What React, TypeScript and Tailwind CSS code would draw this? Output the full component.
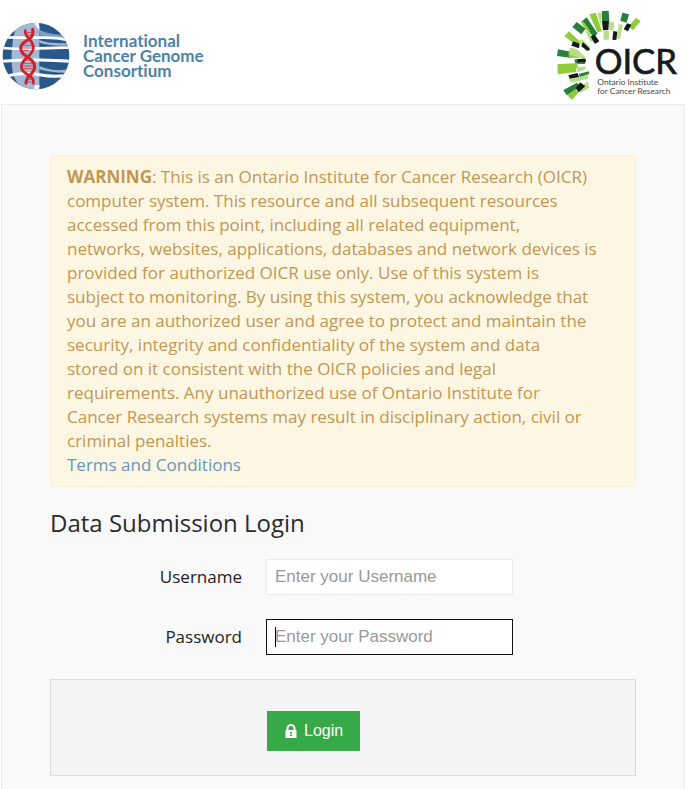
import type { ReactNode } from 'react';

const warningLines = [
  'computer system. This resource and all subsequent resources',
  'accessed from this point, including all related equipment,',
  'networks, websites, applications, databases and network devices is',
  'provided for authorized OICR use only. Use of this system is',
  'subject to monitoring. By using this system, you acknowledge that',
  'you are an authorized user and agree to protect and maintain the',
  'security, integrity and confidentiality of the system and data',
  'stored on it consistent with the OICR policies and legal',
  'requirements. Any unauthorized use of Ontario Institute for',
  'Cancer Research systems may result in disciplinary action, civil or',
  'criminal penalties.',
];

function Globe() {
  return (
    <svg className="h-[68px] w-[68px] shrink-0" viewBox="0 0 204 204" aria-hidden="true">
      <defs>
        <clipPath id="globe">
          <circle cx="102" cy="102" r="100" />
        </clipPath>
      </defs>
      <g clipPath="url(#globe)">
        <rect width="204" height="204" fill="#28598a" />
        <path d="M40 20Q64 0 112 0V204H74Q40 190 32 150Q22 90 40 20Z" fill="#a3b8d7" />
        <path d="M112 24Q150 40 190 38V50Q150 54 112 40Z" fill="#7f9fc5" />
        <path d="M112 54Q150 68 204 62V70Q150 74 112 62Z" fill="#a3b8d7" />
        <path d="M112 132Q150 150 204 142V152Q150 154 112 142Z" fill="#a3b8d7" />
        <g fill="none" stroke="#fff">
          <path d="M0 78Q40 82 112 79T204 77" strokeWidth="8" />
          <path d="M0 118Q60 113 112 114T204 118" strokeWidth="9" />
          <path d="M18 161Q70 150 112 158T196 160" strokeWidth="9" />
          <path d="M14 46Q60 48 112 47T194 54" strokeWidth="8" />
        </g>
        <path d="M94 0H108L112 14V26L104 14Z" fill="#fff" />
        <path d="M98 190H114L108 204H96Z" fill="#fff" />
      </g>
      <path
        d="M72 32H92M72 40H94M62 70H92M60 78H90M64 86H80M64 116H90M58 124H94M58 132H96M60 140H94M80 164H88M72 172H92M70 180H96"
        stroke="#e0494c"
        strokeWidth="3"
      />
      <g fill="none" strokeLinecap="round">
        <path d="M92 22C100 60 56 52 56 78C56 106 98 106 98 134C98 158 72 158 72 184" stroke="#cf2228" strokeWidth="9" />
        <path d="M70 26C66 48 98 54 94 80C90 106 56 110 58 136C60 158 100 160 94 184" stroke="#cf2228" strokeWidth="8" />
      </g>
    </svg>
  );
}

function OicrLogo() {
  return (
    <svg className="h-[104px] w-[140px] shrink-0" viewBox="0 0 420 312" role="img" aria-label="OICR Ontario Institute for Cancer Research">
      <g fill="#27803b">
        <path d="M167 34L188 32L190 64L168 65Z" />
        <path d="M229 38L249 43L242 68L223 62Z" />
        <path d="M79 81L92 66L119 86L106 103Z" />
        <path d="M106 65L122 52L155 101L142 111Z" />
        <path d="M36 148L75 155L78 174L33 168Z" />
        <path d="M85 178L120 180L117 192L88 191Z" />
        <path d="M52 270L93 248L103 262L62 286Z" />
        <path d="M98 222L128 214L130 222L102 232Z" />
      </g>
      <g fill="#90cb3c">
        <path d="M130 43L149 38L168 94L154 97Z" />
        <path d="M270 53L284 64L261 91L248 79Z" />
        <path d="M55 108L69 94L103 126L93 137Z" />
        <path d="M34 192L94 190L95 204L36 209Z" />
        <path d="M34 206L90 200L91 216L36 223Z" />
        <path d="M64 286L88 267L98 277L78 300Z" />
        <path d="M67 157L99 157L97 174L69 173Z" />
        <path d="M106 70L112 64L133 93L126 96Z" />
      </g>
      <g fill="#b8df85">
        <path d="M154 38L166 38L166 86Z" />
        <path d="M172 92L189 92L188 119L173 119Z" />
        <path d="M189 66L205 67L202 92L189 90Z" />
        <path d="M218 72L231 74L222 117L212 116Z" />
        <path d="M116 91L132 98L148 127L133 124Z" />
        <path d="M96 122L108 118L132 141L121 154Z" />
        <path d="M70 143L91 146L118 171L116 178L72 165Z" />
        <path d="M92 202L119 199L118 208L94 217Z" />
        <path d="M68 238L125 225L127 236L76 248Z" />
        <path d="M94 268L125 244L130 263L105 278Z" />
      </g>
      <g fill="#171a1b">
        <path d="M168 63L189 63L187 90L171 91Z" />
        <path d="M202 93L214 95L211 120L199 119Z" />
        <path d="M243 70L256 74L246 94L233 88Z" />
        <path d="M134 110L145 103L160 124L147 132Z" />
        <path d="M81 124L101 131L99 145L76 137Z" />
        <path d="M111 126L133 148L125 153L106 139Z" />
        <path d="M94 177L119 176L119 186L94 187Z" />
        <path d="M67 226L95 219L99 231L71 236Z" />
        <path d="M89 263L103 247L118 259L98 277Z" />
      </g>
      <text x="146" y="223" className="font-[Lato,sans-serif]" fill="#17191a" fontSize="104" stroke="#17191a" strokeWidth="2">
        OICR
      </text>
      <g className="font-[Lato,sans-serif]" fill="#464849" fontSize="25">
        <text x="154" y="256">Ontario Institute</text>
        <text x="154" y="281">for Cancer Research</text>
      </g>
    </svg>
  );
}

function Field({ id, label, children }: { id: string; label: string; children: ReactNode }) {
  return (
    <div className="mb-6 flex items-center gap-6">
      <label htmlFor={id} className="w-48 shrink-0 text-right text-[17px] leading-6 text-[#222]">
        {label}
      </label>
      <div className="relative w-[247px]">{children}</div>
    </div>
  );
}

export default function App() {
  return (
    <div className="min-h-screen bg-white font-['Open_Sans','Noto_Sans',sans-serif]">
      <header className="flex h-[104px] items-start justify-between pl-[2px]">
        <div className="mt-[22px] flex items-center gap-[13px] font-[Lato,sans-serif] text-[17px] leading-[15px] font-bold text-[#4c82aa] [font-variant-ligatures:none]">
          <Globe />
          <p className="pb-[2px]">
            International
            <br />
            Cancer Genome
            <br />
            Consortium
          </p>
        </div>
        <OicrLogo />
      </header>

      <main className="mx-px min-h-[700px] border border-[#ececec] bg-[#f9f9f9] px-12 pt-[50px]">
        <section className="rounded border border-[#fbeed5] bg-[#fdf6e3] px-4 py-[9px] text-[17px] leading-6 text-[#c09853]">
          <p className="whitespace-nowrap">
            <strong className="font-bold">WARNING</strong>: This is an Ontario Institute for Cancer Research (OICR)
            {warningLines.map((line) => (
              <span key={line} className="block">
                {line}
              </span>
            ))}
          </p>
          <a href="#terms" className="block w-fit text-[#6698bd]">
            Terms and Conditions
          </a>
        </section>

        <form onSubmit={(e) => e.preventDefault()}>
          <h1 className="mt-4 mb-4 text-2xl leading-10 text-[#2b2b2b]">Data Submission Login</h1>
          <Field id="username" label="Username">
            <input
              id="username"
              type="text"
              placeholder="Enter your Username"
              className="block h-9 w-full border border-[#ebebeb] bg-white px-2 font-['Liberation_Sans',sans-serif] text-[17px] outline-none placeholder:text-[#999]"
            />
          </Field>
          <Field id="password" label="Password">
            <input
              id="password"
              type="password"
              placeholder="Enter your Password"
              className="block h-9 w-full border border-[#111] bg-white px-2 font-['Liberation_Sans',sans-serif] text-[17px] outline-none placeholder:text-[#999]"
            />
            <span className="absolute top-2 left-[9px] h-5 w-px bg-black" />
          </Field>
          <div className="border border-[#dcdcdc] bg-[#f4f4f4] pt-[31px] pb-6 pl-[216px]">
            <button
              type="submit"
              className="flex h-10 items-center gap-[7px] bg-[#38a948] pr-[17px] pl-[18px] font-['Liberation_Sans',sans-serif] text-base text-white"
            >
              <svg className="h-[14px] w-3" viewBox="0 0 12 14" aria-hidden="true">
                <path d="M2.5 6V4.5a3.5 3.5 0 0 1 7 0V6" fill="none" stroke="#fff" strokeWidth="2" />
                <path d="M.5 6h11v8H.5z" fill="#fff" />
                <path d="M5 8.5h2M6 8.5V12M5 11.5h2" stroke="#38a948" strokeWidth="1" />
              </svg>
              Login
            </button>
          </div>
        </form>
      </main>
    </div>
  );
}
